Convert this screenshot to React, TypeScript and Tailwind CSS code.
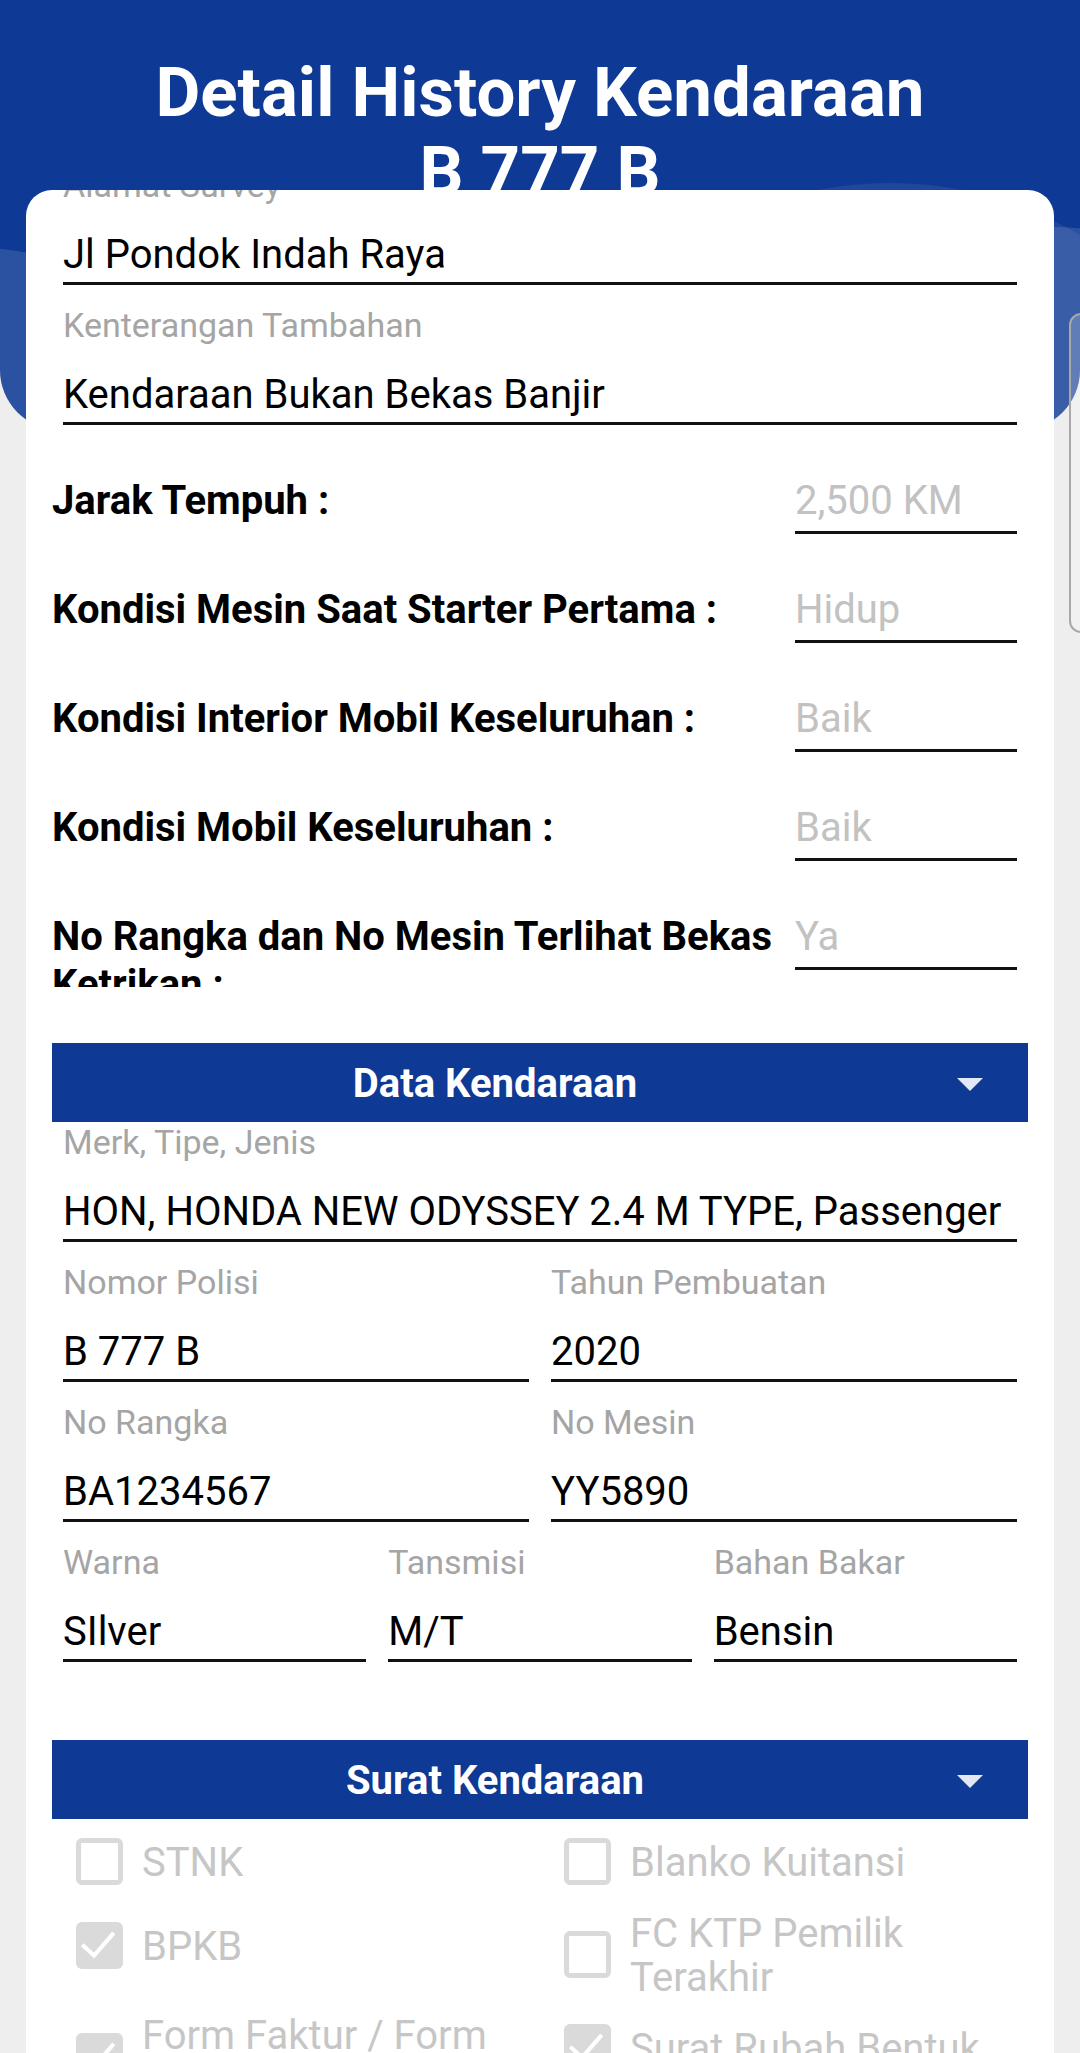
import clsx from "clsx";

const conditionRows = [
    { label: "Jarak Tempuh :", value: "2,500 KM" },
    { label: "Kondisi Mesin Saat Starter Pertama :", value: "Hidup" },
    { label: "Kondisi Interior Mobil Keseluruhan :", value: "Baik" },
    { label: "Kondisi Mobil Keseluruhan :", value: "Baik" },
    { label: "No Rangka dan No Mesin Terlihat Bekas Ketrikan :", value: "Ya" },
];

const documents = [
    { label: "STNK", checked: false },
    { label: "Blanko Kuitansi", checked: false },
    { label: "BPKB", checked: true },
    { label: "FC KTP Pemilik Terakhir", checked: false },
    { label: "Form Faktur / Form Kuitansi", checked: true },
    { label: "Surat Rubah Bentuk", checked: true },
];

function Field({ label, value, className }: { label: string; value: string; className?: string }) {
    return (
        <div className={clsx("px-[11px]", className)}>
            <div className="text-[34px] leading-[40px] text-[#a5a5a5] whitespace-nowrap">{label}</div>
            <div className="mt-[26px] overflow-hidden whitespace-nowrap border-b-[3px] border-[#111] pb-[3px] text-[40px] leading-[48px] text-black">
                {value}
            </div>
        </div>
    );
}

function ConditionRow({ label, value, className }: { label: string; value: string; className?: string }) {
    return (
        <div className={clsx("flex h-[75px] items-start", className)}>
            <div className="h-[75px] flex-1 overflow-hidden pr-[10px] pt-[1px] text-[40px] font-bold leading-[48px] text-black">
                {label}
            </div>
            <div className="mr-[11px] w-[222px] border-b-[3px] border-[#111] pt-[1px] pb-[6px] text-[40px] leading-[48px] text-[#c2c2c2]">
                {value}
            </div>
        </div>
    );
}

function SectionBar({ title, className }: { title: string; className?: string }) {
    return (
        <div className={clsx("flex h-[79px] items-center bg-[#0e3994]", className)}>
            <div className="flex-1 pt-[2px] text-center text-[40px] font-bold text-white">{title}</div>
            <div className="mr-[26px] flex w-[64px] justify-center pt-[4px]">
                <svg width="26" height="13" viewBox="0 0 26 13">
                    <polygon points="0,0 26,0 13,13" fill="#e3e8f4" />
                </svg>
            </div>
        </div>
    );
}

function CheckItem({ label, checked }: { label: string; checked: boolean }) {
    return (
        <div className="flex min-h-[84px] items-center pl-[24px]">
            {checked ? (
                <div className="flex h-[47px] w-[47px] shrink-0 items-center justify-center rounded-[6px] bg-[#dadada]">
                    <svg width="47" height="47" viewBox="0 0 24 24" fill="none">
                        <polyline points="3.2,11.6 9.2,17.1 19.3,5.6" stroke="#fff" strokeWidth="2.1" />
                    </svg>
                </div>
            ) : (
                <div className="h-[47px] w-[47px] shrink-0 rounded-[6px] border-[5px] border-[#dadada]" />
            )}
            <span className="ml-[19px] flex-1 pt-[9px] pb-[5px] text-[40px] leading-[44px] text-[#c6c6c6]">{label}</span>
        </div>
    );
}

export default function App() {
    return (
        <div className="relative h-[2053px] w-[1080px] overflow-hidden bg-[#eeeeee] font-['Roboto',sans-serif]">
            {/* Header background */}
            <div className="absolute left-0 top-0 h-[430px] w-full overflow-hidden rounded-b-[60px] bg-[#0e3994]">
                <div className="absolute left-[-505px] top-[246px] h-[910px] w-[910px] rounded-full bg-white/[0.12]" />
                <div className="absolute left-[-470px] top-[256px] h-[900px] w-[496px] rounded-full bg-white/[0.07]" />
                <div className="absolute left-[517px] top-[183px] h-[746px] w-[746px] rounded-full bg-white/[0.07]" />
                <div className="absolute left-[700px] top-[227px] h-[700px] w-[700px] rounded-full bg-white/[0.12]" />
            </div>

            {/* Next card peeking on the right */}
            <div className="absolute left-[1069px] top-[313px] h-[320px] w-[60px] rounded-[12px] border-2 border-[#a8a8a8] bg-white/20" />

            <h1 className="relative h-[190px] pt-[53px] text-center text-[69px] font-bold leading-[79px] text-white">
                Detail History Kendaraan
                <br />
                B 777 B
            </h1>

            {/* Card */}
            <div className="relative mx-[26px] h-[1863px] overflow-hidden rounded-t-[26px] bg-white">
                <div className="-mt-[25px] px-[26px]">
                    <Field label="Alamat Survey" value="Jl Pondok Indah Raya" />
                    <Field label="Kenterangan Tambahan" value="Kendaraan Bukan Bekas Banjir" className="mt-[20px]" />

                    {conditionRows.map((row, index) => (
                        <ConditionRow
                            key={index}
                            label={row.label}
                            value={row.value}
                            className={index === 0 ? "mt-[51px]" : "mt-[34px]"}
                        />
                    ))}

                    {/* Data Kendaraan */}
                    <SectionBar title="Data Kendaraan" className="mt-[56px]" />
                    <Field label="Merk, Tipe, Jenis" value="HON, HONDA NEW ODYSSEY 2.4 M TYPE, Passenger" />
                    <div className="mt-[20px] grid grid-cols-2">
                        <Field label="Nomor Polisi" value="B 777 B" />
                        <Field label="Tahun Pembuatan" value="2020" />
                    </div>
                    <div className="mt-[20px] grid grid-cols-2">
                        <Field label="No Rangka" value="BA1234567" />
                        <Field label="No Mesin" value="YY5890" />
                    </div>
                    <div className="mt-[20px] grid grid-cols-3">
                        <Field label="Warna" value="SIlver" />
                        <Field label="Tansmisi" value="M/T" />
                        <Field label="Bahan Bakar" value="Bensin" />
                    </div>

                    {/* Surat Kendaraan */}
                    <SectionBar title="Surat Kendaraan" className="mt-[78px]" />
                    <div className="grid grid-cols-2 items-start">
                        {documents.map((doc, index) => (
                            <CheckItem key={index} label={doc.label} checked={doc.checked} />
                        ))}
                    </div>
                </div>
            </div>
        </div>
    );
}
